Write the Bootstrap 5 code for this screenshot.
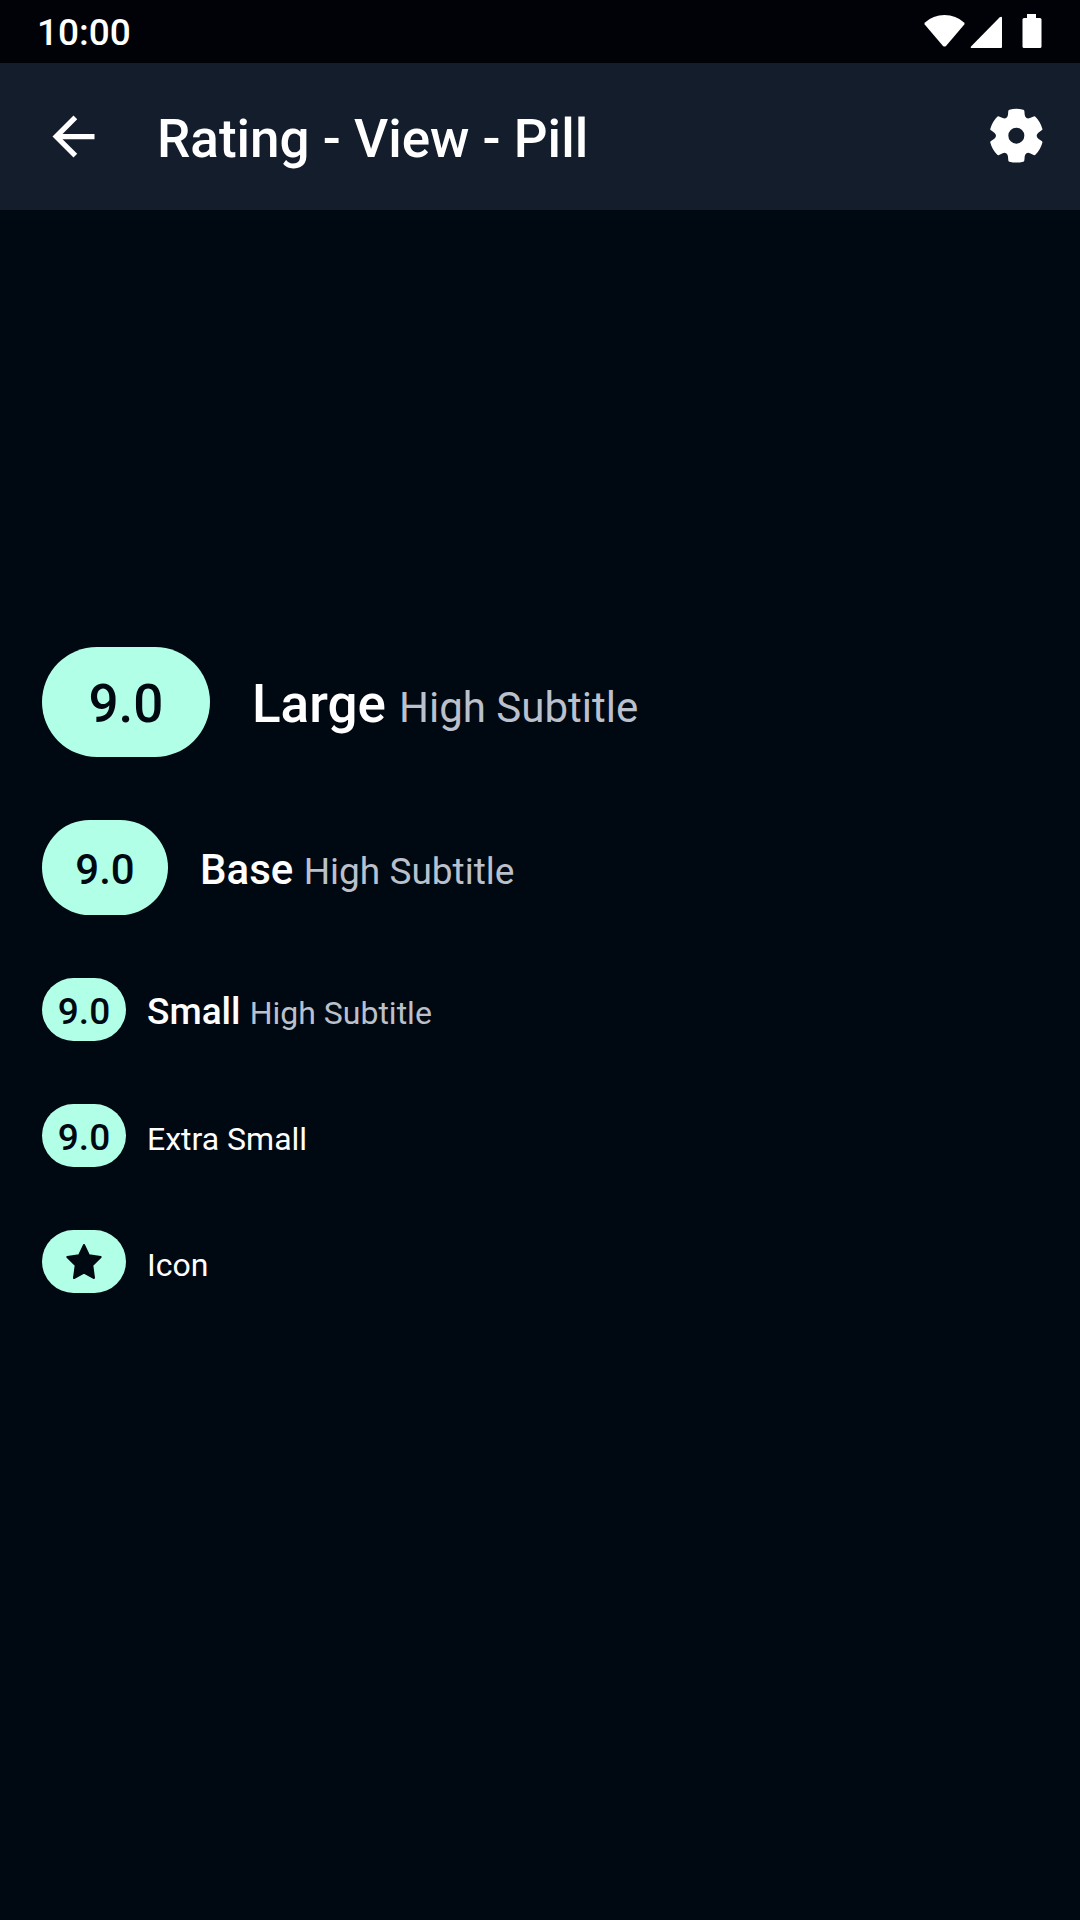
<!DOCTYPE html>
<html lang="en">
<head>
<meta charset="utf-8">
<meta name="viewport" content="width=device-width, initial-scale=1">
<title>Rating - View - Pill</title>
<link href="https://cdn.jsdelivr.net/npm/bootstrap@5.3.0/dist/css/bootstrap.min.css" rel="stylesheet">
<style>
body { background: #000811; color: #fff; font-family: Roboto, "Liberation Sans", sans-serif; }
.status-bar { height: 63px; background: #000208; padding: 3px 38px 0 37px; font-size: 37px; font-weight: 500; line-height: 44px; }
.app-bar { height: 147px; background: #141d2b; padding: 0 32px 0 42px; }
.app-title { font-size: 53px; font-weight: 500; line-height: 62px; margin-left: 52px; padding-top: 4px; }
.icon-btn { color: #fff; line-height: 0; }
.ratings { gap: 63px; padding: 0 42px 190px; }
.pill { background: #b2ffe7; color: #000811; font-weight: 500; }
.pill, .caption-line { line-height: 1; padding-top: 4px; }
.title-text { font-weight: 500; }
.sub-text { color: #bac0cc; }
.size-lg { gap: 42px; font-size: 53px; }
.size-lg .pill { width: 168px; height: 110px; border-radius: 55px; }
.size-lg .sub-text { font-size: 42px; }
.size-base { gap: 32px; font-size: 42px; }
.size-base .pill { width: 126px; height: 95px; border-radius: 48px; }
.size-base .sub-text { font-size: 37px; }
.size-sm { gap: 21px; font-size: 37px; }
.size-sm .pill { width: 84px; height: 63px; border-radius: 32px; }
.size-sm .sub-text, .plain-text { font-size: 32px; }
.size-sm .pill-icon { padding-top: 0; }
</style>
</head>
<body class="d-flex flex-column min-vh-100">
<div class="status-bar d-flex align-items-center justify-content-between">
  <time>10:00</time>
  <svg width="118" height="38" viewBox="0 0 118 38" fill="#fff" aria-hidden="true">
    <path d="M1 8.500Q9 1 20.500 1T40 8.500Q41 9.500 40.300 10.400L22 32Q20.500 33 19 32L.7 10.400Q0 9.500 1 8.500Z"/>
    <path d="M47 32.500L75.500 3.500Q78 2 78 4V33Q78 34 77 34H48Q46 34 47 32.500Z"/>
    <path d="M103 0h9v4h4q1.500 0 1.500 1.500v27q0 1.500-1.500 1.500h-16q-1.500 0-1.500-1.500v-27q0-1.500 1.500-1.500h3Z"/>
  </svg>
</div>
<header class="app-bar d-flex align-items-center">
  <button type="button" class="icon-btn btn p-0 border-0" aria-label="Back">
    <svg width="63" height="63" viewBox="0 0 24 24" fill="currentColor"><path d="M20 11H7.830l5.590-5.590L12 4l-8 8 8 8 1.410-1.410L7.830 13H20v-2z"/></svg>
  </button>
  <h1 class="app-title mb-0 me-auto">Rating - View - Pill</h1>
  <button type="button" class="icon-btn btn p-0 border-0" aria-label="Settings">
    <svg width="63" height="63" viewBox="-94 -92 189 189" fill="currentColor" fill-rule="evenodd"><path d="M78-21Q79-18 76-16L66-9Q61-5 61 0Q61 5 66 9L76 16Q79 18 78 21A81 81 0 0 1 57.200 57Q55.100 59.400 51.900 57.800L40.800 52.700Q34.800 50.300 30.500 52.800Q26.200 55.300 25.200 61.700L24.100 73.800Q23.900 77.400 20.800 78A81 81 0 0 1-20.800 78Q-23.900 77.400-24.100 73.800L-25.200 61.700Q-26.200 55.300-30.500 52.800Q-34.800 50.300-40.800 52.700L-51.900 57.800Q-55.100 59.400-57.200 57A81 81 0 0 1-78 21Q-79 18-76 16L-66 9Q-61 5-61 0Q-61-5-66-9L-76-16Q-79-18-78-21A81 81 0 0 1-57.200-57Q-55.100-59.400-51.900-57.800L-40.800-52.700Q-34.800-50.300-30.500-52.800Q-26.200-55.300-25.200-61.700L-24.100-73.800Q-23.900-77.400-20.800-78A81 81 0 0 1 20.800-78Q23.900-77.400 24.100-73.800L25.200-61.700Q26.200-55.300 30.500-52.800Q34.800-50.300 40.800-52.700L51.900-57.800Q55.100-59.400 57.200-57A81 81 0 0 1 78-21ZM24 0A24 24 0 1 0-24 0A24 24 0 1 0 24 0Z"/></svg>
  </button>
</header>
<main class="ratings d-flex flex-column justify-content-center flex-grow-1">
  <div class="size-lg d-flex align-items-center">
    <span class="pill d-flex align-items-center justify-content-center">9.0</span>
    <div class="caption-line"><span class="title-text">Large</span> <span class="sub-text">High Subtitle</span></div>
  </div>
  <div class="size-base d-flex align-items-center">
    <span class="pill d-flex align-items-center justify-content-center">9.0</span>
    <div class="caption-line"><span class="title-text">Base</span> <span class="sub-text">High Subtitle</span></div>
  </div>
  <div class="size-sm d-flex align-items-center">
    <span class="pill d-flex align-items-center justify-content-center">9.0</span>
    <div class="caption-line"><span class="title-text">Small</span> <span class="sub-text">High Subtitle</span></div>
  </div>
  <div class="size-sm d-flex align-items-center">
    <span class="pill d-flex align-items-center justify-content-center">9.0</span>
    <div class="caption-line"><span class="plain-text">Extra Small</span></div>
  </div>
  <div class="size-sm d-flex align-items-center">
    <span class="pill pill-icon d-flex align-items-center justify-content-center">
      <svg width="36" height="36" viewBox="0 2 108 108" fill="currentColor" stroke="currentColor" stroke-width="6" stroke-linejoin="round" role="img" aria-label="Star"><path d="M54 5L69 36L104 41L79 66L84 104L54 88L24 104L29 66L4 41L39 36Z"/></svg>
    </span>
    <div class="caption-line"><span class="plain-text">Icon</span></div>
  </div>
</main>
<script src="https://cdn.jsdelivr.net/npm/bootstrap@5.3.0/dist/js/bootstrap.bundle.min.js"></script>
</body>
</html>
